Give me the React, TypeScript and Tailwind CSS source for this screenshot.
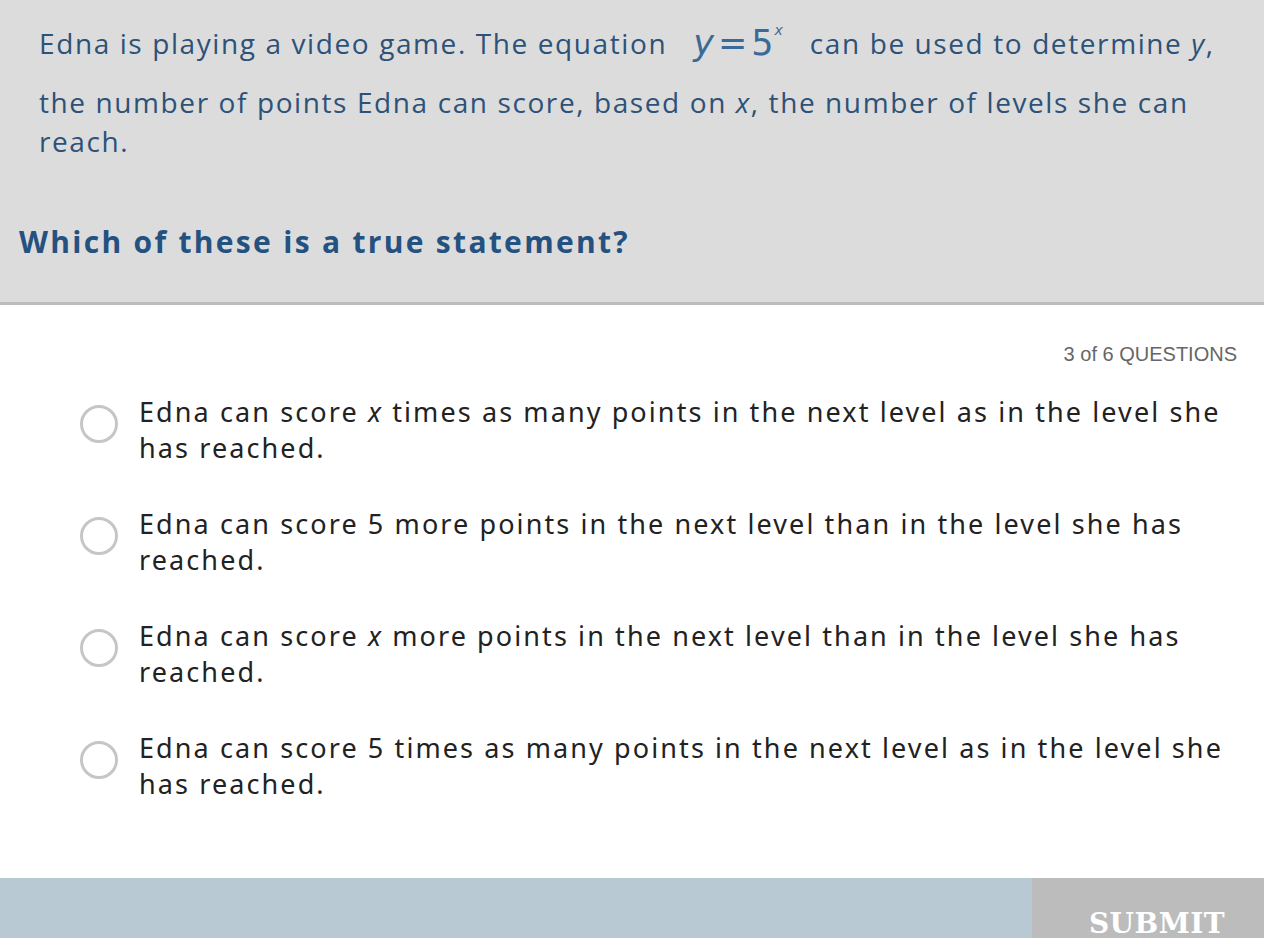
import React from 'react';

const answers: React.ReactNode[] = [
  <>Edna can score <i>x</i> times as many points in the next level as in the level she has reached.</>,
  <>Edna can score 5 more points in the next level than in the level she has reached.</>,
  <>Edna can score <i>x</i> more points in the next level than in the level she has reached.</>,
  <>Edna can score 5 times as many points in the next level as in the level she has reached.</>,
];

export default function App() {
  return (
    <div className="w-[1264px] h-[938px] overflow-hidden bg-white flex flex-col">
      {/* question stem */}
      <div className="h-[305px] shrink-0 bg-[#dcdcdc] border-b-[3px] border-[#bcbcbc] text-[#2c5279] font-['Open_Sans',sans-serif]">
        <div className="pl-[39px] pt-[21px] text-[28px] leading-[39px] tracking-[1.6px]">
          <div className="flex items-center h-[44px] whitespace-nowrap">
            <span>Edna is playing a video game. The equation</span>
            <span className="mx-[26px] text-[#3a6a98] text-[35px] leading-none tracking-[1px] font-['DejaVu_Sans',sans-serif]">
              <i>y</i>
              <span className="mx-[3px]">=</span>5<sup className="text-[14px] italic align-super">x</sup>
            </span>
            <span>can be used to determine <i>y</i>,</span>
          </div>
          <div className="mt-[18px] whitespace-nowrap">the number of points Edna can score, based on <i>x</i>, the number of levels she can</div>
          <div>reach.</div>
        </div>
        <h2 className="pl-[19px] mt-[61px] text-[30px] font-bold tracking-[2.3px] text-[#245180] leading-[40px]">
          Which of these is a true statement?
        </h2>
      </div>

      {/* answers */}
      <div className="flex-1 flex flex-col">
        <div className="flex justify-end pr-[27px] pt-[38px] text-[20px] text-[#666] font-['Liberation_Sans',sans-serif] leading-[22px]">
          3 of 6 QUESTIONS
        </div>
        <div className="flex flex-col gap-[40px] mt-[29px] pl-[80px] pr-[28px]">
          {answers.map((a, i) => (
            <label key={i} className="flex items-start gap-[21px] cursor-pointer">
              <span className="mt-[11px] w-[38px] h-[38px] shrink-0 rounded-full border-[3px] border-[#c6c6c6] bg-white" />
              <span className="text-[27px] leading-[36px] tracking-[2.1px] text-[#222] font-['Noto_Sans',sans-serif]">
                {a}
              </span>
            </label>
          ))}
        </div>
      </div>

      {/* footer */}
      <div className="h-[60px] shrink-0 flex bg-[#b9c9d4]">
        <div className="flex-1" />
        <button className="w-[232px] bg-[#bcbcbc] text-white font-['DejaVu_Serif',serif] font-bold text-[28px] tracking-[0.5px] pl-[18px] pt-[28px] leading-[36px] text-center">
          SUBMIT
        </button>
      </div>
    </div>
  );
}
